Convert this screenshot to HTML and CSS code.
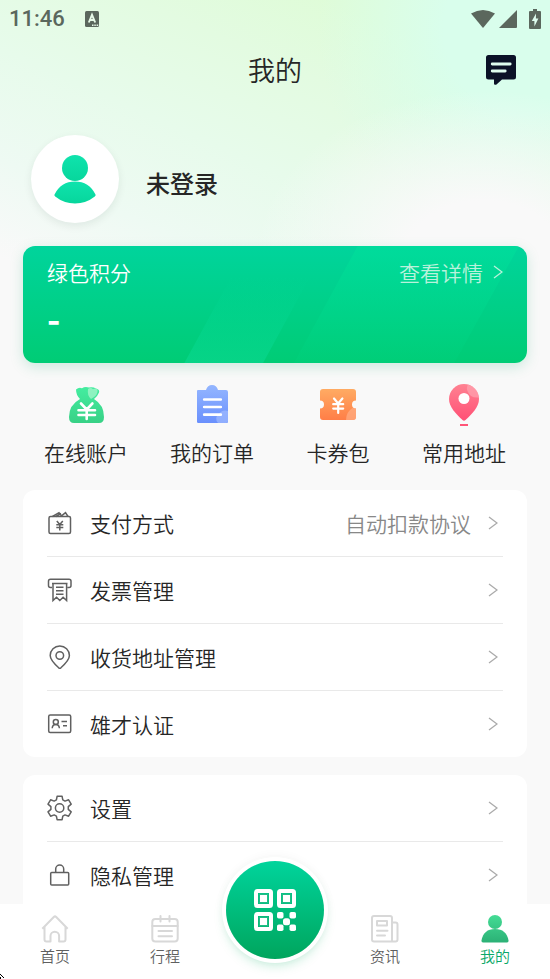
FILE: index.html
```html
<!DOCTYPE html>
<html lang="zh-CN">
<head>
<meta charset="utf-8">
<meta name="viewport" content="width=device-width, initial-scale=1">
<title>我的</title>
<link rel="stylesheet" href="styles.css">
</head>
<body>
<svg class="defs" aria-hidden="true">
  <defs>
    <linearGradient id="g-user" x1="0" y1="0" x2="0" y2="1"><stop offset="0" stop-color="#0fe3ad"/><stop offset="1" stop-color="#07d69c"/></linearGradient>
    <linearGradient id="g-bag" x1="0" y1="0" x2="0" y2="1"><stop offset="0" stop-color="#44eda0"/><stop offset="1" stop-color="#38d186"/></linearGradient>
    <linearGradient id="g-order" x1="0" y1="0" x2="0" y2="1"><stop offset="0" stop-color="#94b6ff"/><stop offset="1" stop-color="#6a90fd"/></linearGradient>
    <linearGradient id="g-ticket" x1="0" y1="0" x2="0" y2="1"><stop offset="0" stop-color="#ffab63"/><stop offset="1" stop-color="#ff7e47"/></linearGradient>
    <linearGradient id="g-pin" x1="0" y1="0" x2="0" y2="1"><stop offset="0" stop-color="#ff8292"/><stop offset="1" stop-color="#ff5075"/></linearGradient>
    <linearGradient id="g-me" gradientUnits="userSpaceOnUse" x1="0" y1="0" x2="0" y2="28"><stop offset="0" stop-color="#44dc95"/><stop offset="1" stop-color="#2bb075"/></linearGradient>
    <symbol id="chevron" viewBox="0 0 10 14"><path d="M1 1l8 6-8 6" fill="none" stroke="currentColor" stroke-width="1.3"/></symbol>
  </defs>
</svg>
<div class="app">
  <div class="status">
    <div class="status-side">
      <span class="clock">11:46</span>
      <svg width="14" height="16" viewBox="0 0 14 16" aria-hidden="true"><rect width="14" height="16" rx="1.5" fill="#5b675d"/><path d="M3.800 11.500L7 3.800l3.200 7.700M5 9h4" fill="none" stroke="#e8fae9" stroke-width="1.900"/><path d="M7 14.200h7" stroke="#e8fae9" stroke-width="1.400" stroke-dasharray="1.500 .8"/></svg>
    </div>
    <div class="status-side status-right">
      <svg width="24" height="18" viewBox="0 0 24 18" aria-hidden="true"><path d="M0 3.500Q12-3.500 24 3.500L12 18Z" fill="#5b675d"/></svg>
      <svg width="18" height="18" viewBox="0 0 18 18" aria-hidden="true"><path d="M18 0v17q0 1-1 1H0Z" fill="#5b675d"/></svg>
      <svg class="battery" width="12" height="20" viewBox="0 0 12 20" aria-hidden="true"><path d="M4 0h4v2h3q1 0 1 1v16q0 1-1 1H1q-1 0-1-1V3q0-1 1-1h3Z" fill="#5b675d"/><path d="M7 4.500L2.800 12h2.600v5.500L9.400 9.500H6.900Z" fill="#dffdef"/></svg>
    </div>
  </div>
  <header class="topbar">
    <h1>我的</h1>
    <button class="message" type="button" aria-label="消息">
      <svg width="30" height="30" viewBox="0 0 30 30"><path d="M2.500 0h25Q30 0 30 2.500v19.500q0 2.500-2.500 2.500H16L10.500 29.400q-2.500 1.200-2.500-1v-3.900H2.500Q0 24.500 0 22V2.500Q0 0 2.500 0Z" fill="#0b1227"/><path d="M6.200 9h18M6.200 16h13" stroke="#dffdef" stroke-width="2.800" stroke-linecap="round"/></svg>
    </button>
  </header>
  <main class="content">
    <section class="profile">
      <div class="avatar">
        <svg width="42" height="49" viewBox="0 0 42 49" aria-hidden="true"><circle cx="21" cy="13" r="13" fill="url(#g-user)"/><path d="M.5 39.500Q7 26.500 21 26.500T41.500 39.500q.5 1-.7 2Q32 48.500 21 48.500T1.200 41.500q-1.200-1-.7-2Z" fill="url(#g-user)"/></svg>
      </div>
      <h2>未登录</h2>
    </section>

    <section class="points">
      <svg class="stripes" viewBox="0 0 506 117" preserveAspectRatio="none" aria-hidden="true">
        <defs>
          <linearGradient id="g-s1" x1="0" y1="0" x2="0" y2="1"><stop offset=".25" stop-color="#00dc9a" stop-opacity="0"/><stop offset="1" stop-color="#0ddc98" stop-opacity=".5"/></linearGradient>
          <linearGradient id="g-s2" x1="0" y1="0" x2="0" y2="1"><stop offset="0" stop-color="#00e09c" stop-opacity=".6"/><stop offset="1" stop-color="#00d884" stop-opacity=".15"/></linearGradient>
        </defs>
        <path d="M162 117L226 0h79l-64 117Z" fill="url(#g-s1)"/>
        <path d="M272 117L336 0h162l-65 117Z" fill="url(#g-s2)"/>
      </svg>
      <div class="points-head">
        <h3>绿色积分</h3>
        <a href="#detail">查看详情<svg class="chevron"><use href="#chevron"/></svg></a>
      </div>
      <p class="points-value">-</p>
    </section>

    <nav class="quick" aria-label="快捷入口">
      <a href="#account">
        <svg width="42" height="42" viewBox="0 0 42 42" aria-hidden="true"><path d="M11 4.500q3-2.500 6-1.200 3-2.300 7-.8 4-.8 7 1 4 1 3 4-1 3-5 6.500Q39 20 39 32q0 6-5 6H9q-5 0-5-6 0-12 11-18-4-4-4-9.500Z" fill="url(#g-bag)"/><path d="M23 4q3-2 5 .3 3-1.700 4.500.7 1 5-6.500 9-4-3-3-10Z" fill="#a8f5cc" opacity=".75"/><path d="M16 18.500l5.700 6 5.700-6M13.500 25.200h16.500M13.500 30h16.500M21.700 24.500v9.500" fill="none" stroke="#fff" stroke-width="2.600" stroke-linecap="round"/></svg>
        <span>在线账户</span>
      </a>
      <a href="#orders">
        <svg width="42" height="42" viewBox="0 0 42 42" aria-hidden="true"><path d="M7 5h8q1.500-5 6-5t6 5h8q2 0 2 2v30q0 1-1.500 1H7.500Q6 38 6 37V6q0-1 1-1Z" fill="url(#g-order)"/><path d="M37 26v10q0 2-2 2h-8q-4-5 .5-8.500Q31 24 37 26Z" fill="#a9c1ff" opacity=".6"/><path d="M13.200 14.500h16.600M13.200 22h16.600M13.200 29.700h16.600" stroke="#fff" stroke-width="2.700" stroke-linecap="round"/></svg>
        <span>我的订单</span>
      </a>
      <a href="#coupons">
        <svg width="42" height="42" viewBox="0 0 42 42" aria-hidden="true"><path d="M6 4h30q3 0 3 3v8.500a4 4 0 0 0 0 8V32q0 3-3 3H6q-3 0-3-3v-8.500a4 4 0 0 0 0-8V7q0-3 3-3Z" fill="url(#g-ticket)"/><path d="M39 23.500V32q0 3-3 3h-7q0-8 6.500-12Z" fill="#ffb28b" opacity=".65"/><path d="M17 13.500l4.200 5 4.200-5M16.200 19.200h10M16.200 23.600h10M21.200 19v9" fill="none" stroke="#fff" stroke-width="2.200" stroke-linecap="round"/></svg>
        <span>卡券包</span>
      </a>
      <a href="#places">
        <svg width="42" height="42" viewBox="0 0 42 42" aria-hidden="true"><path d="M21-1a15 15 0 0 1 15 15c0 8-7 15-13.500 21q-1.500 1.300-3 0C13 29 6 22 6 14A15 15 0 0 1 21-1Z" fill="url(#g-pin)"/><path d="M25-.5q10 3 11 13-9 1-11.500-6.500Q23 3 25-.5Z" fill="#ffa7b4" opacity=".65"/><circle cx="21" cy="13.500" r="5.500" fill="#fff"/><path d="M17 40h8" stroke="#ff5578" stroke-width="2"/></svg>
        <span>常用地址</span>
      </a>
    </nav>

    <section class="panel">
      <a class="row" href="#pay">
        <svg class="icon" viewBox="0 0 26 26" aria-hidden="true"><rect x="2" y="6.500" width="21.500" height="17" rx="1.500"/><path d="M5.500 6.500L12 2.700l2.500 3.200 4-3.200 2.500 3.800M9 6.500l5-3M9.800 11l3 3.500 3-3.500M9.300 14.800h7M9.300 17.500h7M12.800 14.500v6"/></svg>
        <span class="label">支付方式</span><span class="note">自动扣款协议</span><svg class="chevron"><use href="#chevron"/></svg>
      </a>
      <a class="row" href="#invoice">
        <svg class="icon" viewBox="0 0 26 26" aria-hidden="true"><path d="M5 10.500H3.500q-2 0-2-2V4.200q0-2 2-2h18.500q2 0 2 2v4.300q0 2-2 2h-1.500M5 6.500h15.500M6 6.500v17l3.500-3.300 3.300 3.300 3.300-3.300 3.500 3.300v-17M9 10.300h7.500M9 13.800h7.500M9 17.200h7.500"/></svg>
        <span class="label">发票管理</span><svg class="chevron"><use href="#chevron"/></svg>
      </a>
      <a class="row" href="#delivery">
        <svg class="icon" viewBox="0 0 26 26" aria-hidden="true"><path d="M12.800 2a9.600 9.600 0 0 1 9.600 9.600c0 4.400-4 8.200-8.500 12.200q-1.100.9-2.200 0C7.200 19.800 3.200 16 3.200 11.600A9.600 9.600 0 0 1 12.800 2Z"/><circle cx="12.800" cy="11.500" r="3.800"/></svg>
        <span class="label">收货地址管理</span><svg class="chevron"><use href="#chevron"/></svg>
      </a>
      <a class="row" href="#verify">
        <svg class="icon" viewBox="0 0 26 26" aria-hidden="true"><rect x="1.700" y="4" width="22" height="17.500" rx="1.500"/><circle cx="8.800" cy="11" r="2.500"/><path d="M5.200 17.300q.3-3.800 3.600-3.800t3.600 3.800M14.500 10.500h5.500M16 14.800h4"/></svg>
        <span class="label">雄才认证</span><svg class="chevron"><use href="#chevron"/></svg>
      </a>
    </section>

    <section class="panel panel-last">
      <a class="row" href="#settings">
        <svg class="icon" viewBox="0 0 26 26" aria-hidden="true"><path d="M10.100 1.300h5l.7 3.600 2.200 1.200 3.600-1.300 2.600 4.300-2.900 2.500v2.800l2.900 2.500-2.600 4.300-3.600-1.300-2.200 1.200-.7 3.600h-5l-.7-3.600-2.200-1.200-3.600 1.300L1 16.900l2.900-2.500v-2.800L1 9.100l2.600-4.300 3.600 1.300 2.200-1.200Z" stroke-linejoin="round"/><circle cx="12.600" cy="13" r="4.200"/></svg>
        <span class="label">设置</span><svg class="chevron"><use href="#chevron"/></svg>
      </a>
      <a class="row" href="#privacy">
        <svg class="icon" viewBox="0 0 26 26" aria-hidden="true"><rect x="3.700" y="10.500" width="18" height="12.500" rx="1"/><path d="M8.700 10.500V7a4 4 0 0 1 8 0v3.500"/></svg>
        <span class="label">隐私管理</span><svg class="chevron"><use href="#chevron"/></svg>
      </a>
    </section>
  </main>

  <nav class="tabs" aria-label="主导航">
    <a href="#home">
      <svg class="tab-icon" viewBox="0 0 28 28" aria-hidden="true"><path d="M1.300 13.700L12.800 2q1.200-1.200 2.400 0l11.500 11.700M3.500 11.500V24.500q0 2 2 2H9.500v-5.500a4.300 4.300 0 0 1 8.600 0v5.500h4.400q2 0 2-2V11.500"/></svg>
      <span>首页</span>
    </a>
    <a href="#trips">
      <svg class="tab-icon" viewBox="0 0 28 28" aria-hidden="true"><rect x="1.300" y="4" width="25.400" height="22.500" rx="3"/><path d="M1.300 11h25.400M9.500 1v5.500M18.500 1v5.500M7.500 16h13.500M7.500 21.200h13.500" stroke-linecap="round"/></svg>
      <span>行程</span>
    </a>
    <button class="scan" type="button" aria-label="二维码">
      <svg width="42" height="42" viewBox="0 0 42 42" aria-hidden="true"><g fill="none" stroke="#fff" stroke-width="4"><rect x="2" y="2" width="15" height="15" rx="1.500"/><rect x="25" y="2" width="15" height="15" rx="1.500"/><rect x="2" y="25" width="15" height="15" rx="1.500"/></g><g fill="#fff"><rect x="6" y="6" width="7" height="7"/><rect x="29" y="6" width="7" height="7"/><rect x="6" y="29" width="7" height="7"/><rect x="23" y="23" width="6.500" height="6.500" rx="1.800"/><rect x="35.500" y="23" width="6.500" height="6.500" rx="1.800"/><rect x="29" y="29.200" width="7" height="7" rx="2.500"/><rect x="23" y="35.500" width="6.500" height="6.500" rx="1.800"/><rect x="35.500" y="35.500" width="6.500" height="6.500" rx="1.800"/></g><g fill="none" stroke="#21bd87" stroke-width="1.300"><rect x="5.300" y="5.300" width="8.400" height="8.400"/><rect x="28.300" y="5.300" width="8.400" height="8.400"/><rect x="5.300" y="28.300" width="8.400" height="8.400"/></g></svg>
    </button>
    <a href="#news">
      <svg class="tab-icon" viewBox="0 0 28 28" aria-hidden="true"><path d="M21 26.500H3q-2 0-2-2V3q0-2 2-2h16q2 0 2 2v23.500h3.500q2 0 2-2V9.500q0-2-2-2H21"/><rect x="6" y="6" width="10" height="4.500"/><path d="M6 15.700h10.500M6 20.500h8" stroke-linecap="round"/></svg>
      <span>资讯</span>
    </a>
    <a class="active" href="#me" aria-current="page">
      <svg class="tab-icon" viewBox="0 0 28 28" aria-hidden="true"><g fill="url(#g-me)" stroke="none"><circle cx="14" cy="7" r="7"/><path d="M.5 25.500Q2.500 14 14 14t13.500 11.500q.2 2-1.500 2H2q-1.700 0-1.500-2Z"/></g></svg>
      <span>我的</span>
    </a>
  </nav>
  <svg class="pointer" width="5" height="5" viewBox="0 0 5 5" aria-hidden="true"><path d="M0 0h1v1H0ZM1 1h1v1H1ZM2 2h1v1H2ZM3 3h1v1H3ZM0 3h1v2H0Z"/></svg>
</div>
</body>
</html>
```

FILE: styles.css
```css
* {
  box-sizing: border-box;
}

body {
  margin: 0;
  background: #f9f9f9;
  color: #262626;
  font-family: "Noto Sans CJK SC", sans-serif;
  font-size: 21px;
  line-height: 30px;
  font-weight: 350;
}

h1, h2, h3, p {
  margin: 0;
  font-size: inherit;
  font-weight: inherit;
}

a {
  color: inherit;
  text-decoration: none;
}

button {
  border: 0;
  padding: 0;
  background: none;
}

svg {
  display: block;
  flex: none;
}

.defs {
  position: absolute;
  width: 0;
  height: 0;
}

.app {
  position: relative;
  display: flex;
  flex-direction: column;
  height: 100vh;
  overflow: hidden;
  background:
    linear-gradient(to bottom, transparent 235px, #f9f9f9 290px),
    radial-gradient(ellipse 230px 170px at 88% 260px, #f9f9f9 35%, transparent),
    radial-gradient(ellipse 210px 210px at 96% 30px, #d9feec 40%, transparent),
    linear-gradient(24deg, #f9f9f9 59%, #eefaf3 67%, #e7fbeb 76%, #e3fbe1 85%, #dffcd8 92%);
}

.status {
  display: flex;
  flex: none;
  justify-content: space-between;
  height: 38px;
  padding: 0 9px;
  color: #5b675d;
}

.status-side {
  display: flex;
  align-items: center;
  gap: 20px;
}

.status-right {
  gap: 4px;
  padding-right: 0;
}

.battery {
  margin-left: 8px;
}

.clock {
  font-family: Roboto, sans-serif;
  font-size: 22px;
  font-weight: 500;
}

.topbar {
  display: grid;
  grid-template-columns: 1fr auto 1fr;
  flex: none;
  align-items: center;
  height: 64px;
  padding: 0 34px;
}

.topbar h1 {
  grid-column: 2;
  font-size: 27px;
  line-height: 40px;
}

.message {
  justify-self: end;
}

.content {
  flex: 1;
  min-height: 0;
  overflow: hidden;
  padding: 33px 23px 0;
}

.profile {
  display: flex;
  align-items: center;
  gap: 27px;
  padding-left: 8px;
  margin-bottom: 23px;
}

.profile h2 {
  padding-top: 8px;
  font-size: 24px;
  font-weight: 500;
}

.avatar {
  display: grid;
  place-items: center;
  width: 88px;
  height: 88px;
  border-radius: 50%;
  background: #fff;
  box-shadow: 0 3px 8px rgba(0, 40, 20, 0.08);
}

.points {
  position: relative;
  height: 117px;
  margin-bottom: 22px;
  padding: 11px 24px;
  border-radius: 12px;
  background: linear-gradient(#00d49c, #00cc75);
  box-shadow: 0 4px 14px rgba(0, 160, 100, 0.18);
  color: #fff;
}

.stripes {
  position: absolute;
  inset: 0;
  width: 100%;
  height: 100%;
  border-radius: 12px;
}

.points-head {
  position: relative;
  display: flex;
  justify-content: space-between;
}

.points-head a {
  display: flex;
  align-items: center;
  gap: 10px;
  color: #b9f2dc;
}

.chevron {
  width: 10px;
  height: 14px;
}

.points-value {
  position: relative;
  padding-top: 10px;
  font-size: 36px;
  line-height: 40px;
  font-weight: 700;
}

.quick {
  display: grid;
  grid-template-columns: repeat(4, 1fr);
  margin-bottom: 23px;
}

.quick a {
  display: flex;
  flex-direction: column;
  align-items: center;
  gap: 10px;
}

.quick svg {
  overflow: visible;
}

.panel {
  margin-bottom: 18px;
  padding: 0 24px;
  border-radius: 12px;
  background: #fff;
}

.panel-last {
  padding-bottom: 18px;
}

.row {
  display: flex;
  align-items: center;
  height: 66px;
  padding-right: 5px;
}

.row + .row {
  height: 67px;
  border-top: 1px solid #e9e9e9;
}

.row .chevron {
  color: #aaa;
}

.icon {
  width: 26px;
  height: 26px;
  margin-right: 17px;
  fill: none;
  stroke: #606060;
  stroke-width: 1.5;
}

.label {
  flex: 1;
}

.note {
  margin-right: 17px;
  color: #888;
}

.tabs {
  display: grid;
  flex: none;
  grid-template-columns: repeat(5, 1fr);
  position: relative;
  height: 75px;
  background: #fff;
  color: #5f5f5f;
  font-size: 15px;
  line-height: 20px;
}

.tabs a {
  display: flex;
  flex-direction: column;
  align-items: center;
  gap: 3px;
  padding-top: 11px;
}

.tab-icon {
  width: 28px;
  height: 28px;
  fill: none;
  stroke: #d8d8d8;
  stroke-width: 2;
  stroke-linejoin: round;
}

.tabs .active {
  color: #0aa868;
}

.scan {
  display: grid;
  place-items: center;
  justify-self: center;
  width: 98px;
  height: 98px;
  margin-top: -43px;
  border-radius: 50%;
  background: linear-gradient(#00d49c, #00a55d);
  box-shadow: 0 0 0 4px #fff, 0 -2px 10px 4px rgba(0, 0, 0, 0.03), 0 6px 12px rgba(0, 180, 100, 0.25);
}

.pointer {
  position: absolute;
  left: 0;
  bottom: 0;
}
```
